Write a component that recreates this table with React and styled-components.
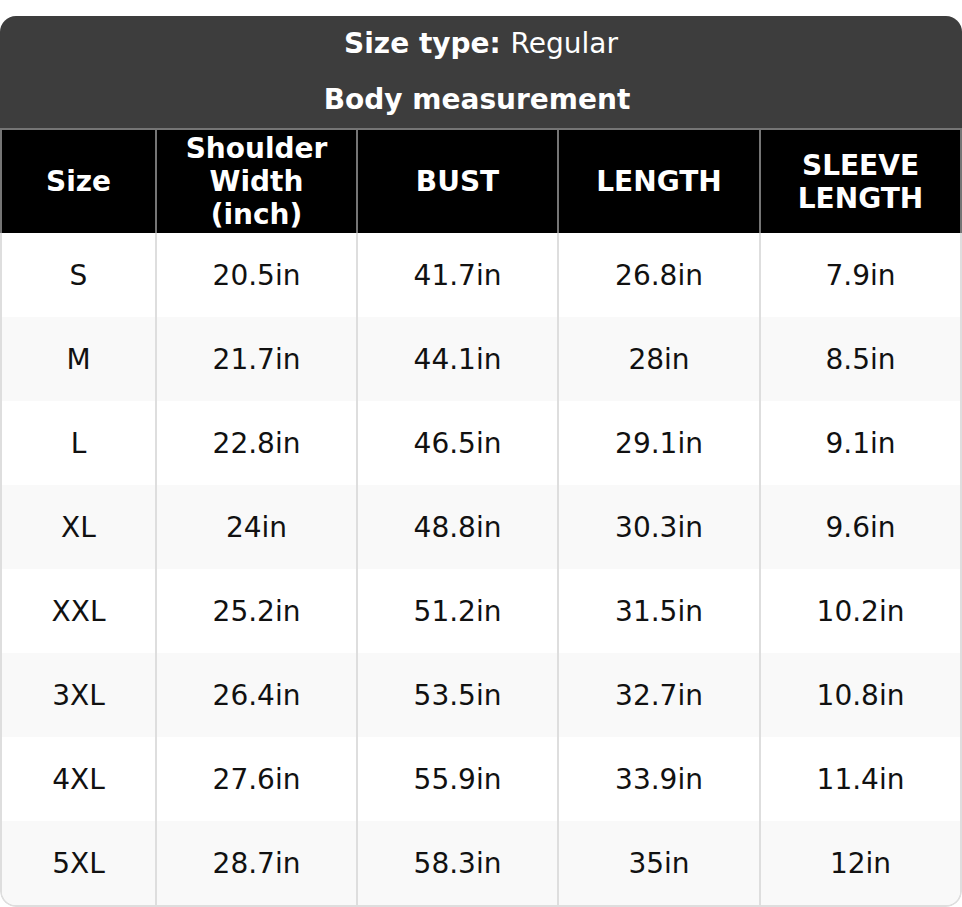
import React from "react";
import styled, { createGlobalStyle } from "styled-components";

const GlobalStyle = createGlobalStyle`
  html, body { margin: 0; padding: 0; background: #ffffff; }
  body { font-family: "DejaVu Sans", "Liberation Sans", sans-serif; }
  * { box-sizing: border-box; }
`;

const Page = styled.div`
  padding-top: 16px;
  width: 962px;
`;

const Chart = styled.div`
  width: 962px;
  border-radius: 16px;
  overflow: hidden;
  background: #ffffff;
`;

const TitleBlock = styled.div`
  background: #3d3d3d;
  color: #ffffff;
  border-bottom: 2px solid #757575;
`;

const TitleLine = styled.div`
  height: ${(p) => p.$h}px;
  display: flex;
  align-items: center;
  justify-content: center;
  font-size: 28px;
  font-weight: ${(p) => (p.$bold ? 700 : 400)};
  padding-right: ${(p) => p.$pr || 0}px;
`;

const Strong = styled.span`
  font-weight: 700;
  white-space: pre;
`;

const Row = styled.div`
  display: grid;
  grid-template-columns: 153px 201px 201px 202px 201px;
  border: 2px solid ${(p) => p.$line};
  border-top: none;
  border-bottom: ${(p) => (p.$closed ? `2px solid ${p.$line}` : "none")};
  border-radius: ${(p) => (p.$closed ? "0 0 16px 16px" : "0")};
  overflow: hidden;
`;

const HeadCell = styled.div`
  background: #000000;
  color: #ffffff;
  height: 103px;
  display: flex;
  align-items: center;
  justify-content: center;
  text-align: center;
  font-size: 28px;
  font-weight: 700;
  line-height: 33px;
  border-left: ${(p) => (p.$first ? "none" : "2px solid #757575")};
`;

const HeadText = styled.span`
  white-space: pre-line;
`;

const Cell = styled.div`
  background: ${(p) => (p.$alt ? "#f9f9f9" : "#ffffff")};
  color: #111111;
  height: 84px;
  display: flex;
  align-items: center;
  justify-content: center;
  font-size: 28px;
  border-left: ${(p) => (p.$first ? "none" : "2px solid #dedede")};
`;

const headers = ["Size", "Shoulder\nWidth\n(inch)", "BUST", "LENGTH", "SLEEVE\nLENGTH"];

const rows = [
  ["S", "20.5in", "41.7in", "26.8in", "7.9in"],
  ["M", "21.7in", "44.1in", "28in", "8.5in"],
  ["L", "22.8in", "46.5in", "29.1in", "9.1in"],
  ["XL", "24in", "48.8in", "30.3in", "9.6in"],
  ["XXL", "25.2in", "51.2in", "31.5in", "10.2in"],
  ["3XL", "26.4in", "53.5in", "32.7in", "10.8in"],
  ["4XL", "27.6in", "55.9in", "33.9in", "11.4in"],
  ["5XL", "28.7in", "58.3in", "35in", "12in"],
];

export default function App() {
  return (
    <>
      <GlobalStyle />
      <Page>
        <Chart>
          <TitleBlock>
            <TitleLine $h={55}>
              <Strong>Size type: </Strong>Regular
            </TitleLine>
            <TitleLine $h={57} $bold $pr={8}>
              Body measurement
            </TitleLine>
          </TitleBlock>
          <Row $line="#757575">
            {headers.map((h, i) => (
              <HeadCell key={h} $first={i === 0}>
                <HeadText>{h}</HeadText>
              </HeadCell>
            ))}
          </Row>
          <Row $line="#dedede" $closed>
            {rows.map((r, ri) =>
              r.map((v, ci) => (
                <Cell key={`${ri}-${ci}`} $first={ci === 0} $alt={ri % 2 === 1}>
                  {v}
                </Cell>
              ))
            )}
          </Row>
        </Chart>
      </Page>
    </>
  );
}
